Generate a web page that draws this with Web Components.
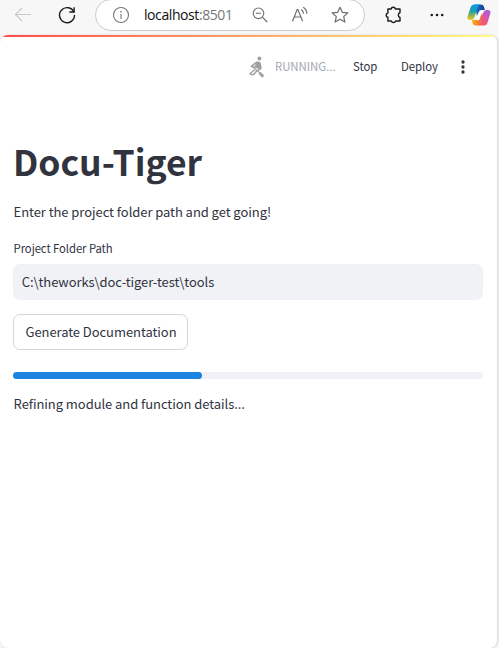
<!DOCTYPE html>
<html lang="en">
<head>
<meta charset="utf-8">
<title>Docu-Tiger</title>
<style>
html,body{margin:0;height:100%;overflow:hidden;background:#f7f7f7}
body{font-family:"Noto Sans CJK SC","Noto Sans",sans-serif;color:#31333f}
</style>
</head>
<body>
<app-window></app-window>
<script>
const define=(name,html)=>customElements.define(name,class extends HTMLElement{
  constructor(){super();this.attachShadow({mode:"open"}).innerHTML=html;}
});

define("browser-bar",`
<style>
:host{display:flex;height:35px;align-items:flex-start;background:#f7f7f7;box-sizing:border-box;padding-left:13px}
svg{display:block;flex:none;fill:none}
.back{margin:5px 24px 0 0}
.reload{margin:5px 18px 0 0}
.address{box-sizing:border-box;flex:none;width:270px;height:32px;margin-top:-1px;border:1px solid #ccc;border-radius:16px;background:#fff;display:flex;align-items:center;padding-left:15px}
.url{font:14px/20px "Open Sans","Noto Sans",sans-serif;color:#111;width:109px;margin-left:13px;white-space:nowrap;letter-spacing:-.42px}
.url span{color:#767676}
.ext{margin:5px 0 0 19px}.more{margin:5px 0 0 23px}.copilot{margin:3px 0 0 20px}
</style>
<svg class="back" width="20" height="20" stroke="#c8c8c8" stroke-width="1.2"><path d="M18 9.5H2.5M9 3L2.5 9.5 9 16"/></svg>
<svg class="reload" width="20" height="20" stroke="#1b1b1b" stroke-width="1.4"><path d="M16.9 7.2A7.5 7.5 0 1 0 17.5 10"/><path d="M17.1 2.3V7H12.3"/></svg>
<div class="address">
<svg width="20" height="20" stroke="#767676" stroke-width="1.1"><circle cx="10" cy="10" r="7.5"/><path d="M10 9v5"/><circle cx="10" cy="6.7" r=".6" fill="#767676" stroke-width=".5"/></svg>
<div class="url">localhost<span>:8501</span></div>
<svg width="18" height="18" style="margin-left:-2px" stroke="#6c6c6c" stroke-width="1.1"><circle cx="7.5" cy="7.3" r="5.3"/><path d="M5 7.3h5M11.4 11.2l4.8 4.8"/></svg>
<svg width="20" height="20" style="margin-left:22px" stroke="#6c6c6c" stroke-width="1.2"><path d="M1.5 16.2L6.2 4.5h.7l4.7 11.7M3.2 12h6.7M10.2 4.6q2 1.2 2.3 4M12.2 2.2q3.5 2 3.7 6.4"/></svg>
<svg width="20" height="20" style="margin-left:19px" stroke="#6c6c6c" stroke-width="1.2" stroke-linejoin="round"><path d="M10 2.3l2.3 5 5.5.6-4.1 3.7 1.2 5.5-4.9-2.8-4.9 2.8 1.2-5.5-4.1-3.7 5.5-.6z"/></svg>
</div>
<svg class="ext" width="20" height="20" stroke="#1b1b1b" stroke-width="1.4" stroke-linejoin="round"><path d="M4 4h3.2a2.2 2.2 0 0 1 4.3 0h4.6v3.5a2.7 2.7 0 0 0 0 5V16h-4.3a2.3 2.3 0 0 1-4.4 0H4v-3.7a2.2 2.2 0 0 1 0-4.3z" transform="translate(-.1 0)"/></svg>
<svg class="more" width="20" height="20"><g fill="#1b1b1b"><circle cx="4.8" cy="10" r="1.3"/><circle cx="10" cy="10" r="1.3"/><circle cx="15.2" cy="10" r="1.3"/></g></svg>
<svg class="copilot" width="24" height="24" viewBox="0.6 0.6 22.8 22.8">
<defs>
<linearGradient id="a" x1="0" y1="0" x2="0" y2="1"><stop offset="0" stop-color="#159ce5"/><stop offset=".4" stop-color="#169db2"/><stop offset=".7" stop-color="#8ab64b"/><stop offset="1" stop-color="#f1c71c"/></linearGradient>
<linearGradient id="b" x1=".8" y1="0" x2=".2" y2="1"><stop offset="0" stop-color="#a95ce8"/><stop offset=".5" stop-color="#e35499"/><stop offset="1" stop-color="#f85f48"/></linearGradient>
<linearGradient id="c" x1="0" y1="0" x2="1" y2="0"><stop offset="0" stop-color="#1877c9"/><stop offset="1" stop-color="#183a9c"/></linearGradient>
<linearGradient id="d" x1="0" y1="0" x2="1" y2="0"><stop offset="0" stop-color="#f9b51e"/><stop offset="1" stop-color="#f1502d"/></linearGradient>
</defs>
<path fill="url(#c)" d="M8 2h6q2 0 2.6 2l1 3.3h-3.2q-2 0-2.7 2L10 13z"/>
<path fill="url(#d)" d="M16 10l-2.8 9.2Q12.3 22 9.8 22H8.5q-2 0-2.5-2l-.8-3.2h3q2 0 2.7-2z"/>
<path fill="url(#a)" d="M7 2h6q-1.8.7-2.5 3L7.8 14q-.8 2.8-3 2.8H3.4q-3 0-2.2-3.4L4 4.6Q4.8 2 7 2z"/>
<path fill="url(#b)" d="M17 22h-6.5q2-.6 2.7-3L16 10q.8-2.7 3-2.7h1.5q3.2 0 2.2 3.4L20 19.5q-.8 2.5-3 2.5z"/>
<path fill="#fff" d="M12.6 8.3h2.6l-2.8 8.2q-.2.6-.8.6H9.2z"/>
</svg>`);

define("status-toolbar",`
<style>
:host{display:flex;height:24px;align-items:center;font-size:11.4px;line-height:24px;white-space:nowrap;padding-left:247px}
svg{flex:none;display:block}
span{margin-top:-2px}
.run{color:#a3a8b4;width:78px;margin-left:8px;letter-spacing:-.05px}
.stop{width:48px;letter-spacing:-.05px}.deploy{width:55px;letter-spacing:-.05px}
</style>
<svg width="20" height="24" fill="#a0a0a0"><circle cx="12.4" cy="3.6" r="2"/><path d="M9.2 6.6h2.6q1.8.2 2.2 2.2l.8 4.6-3.3.6-3.8-1.8z"/><path fill="none" stroke="#a0a0a0" stroke-width="1.5" stroke-linejoin="round" d="M9.5 7.4L4.3 11.4l4.3.8M14.2 13.6l-4.4 2.2-3 3.6H3.6M7.6 14.8L2.4 19.2"/><path fill="none" stroke="#a0a0a0" stroke-width="1.2" d="M5.4 11.6l9 7.6"/><path d="M13.4 17l4 3.6-2.2 2.2-3.6-3.8z"/></svg>
<span class="run">RUNNING...</span><span class="stop">Stop</span><span class="deploy">Deploy</span>
<svg width="14" height="20" fill="#31333f"><circle cx="7" cy="5" r="1.65"/><circle cx="7" cy="10" r="1.65"/><circle cx="7" cy="15" r="1.65"/></svg>`);

define("page-title",`<style>:host{display:block;font-size:35.5px;font-weight:700;line-height:48px;height:48px;white-space:nowrap;letter-spacing:-.06px}</style><slot></slot>`);
define("text-line",`<style>:host{display:block;font-size:13px;line-height:22px;height:22px;white-space:nowrap;letter-spacing:-.06px}</style><slot></slot>`);
define("path-field",`
<style>
:host{display:block;letter-spacing:-.07px}
.label{font-size:11.3px;line-height:18px;height:18px;padding-left:.6px}
.box{height:36px;margin-top:7px;border-radius:7px;background:#f0f2f6;font-size:13px;line-height:36px;padding-left:8.7px}
</style>
<div class="label">Project Folder Path</div><div class="box"><slot></slot></div>`);
define("action-button",`
<style>:host{display:flex;box-sizing:border-box;width:175px;height:36px;border:1px solid #d6d6d9;border-radius:7px;align-items:center;justify-content:center;font-size:13px;line-height:20px;white-space:nowrap;background:#fff;letter-spacing:-.065px;padding-left:1px}</style><slot></slot>`);
define("progress-bar",`
<style>:host{display:block;height:7px;border-radius:4px;background:#f0f2f6}div{width:188.5px;height:7px;border-radius:4px;background:#1c83e1}</style><div></div>`);

define("app-window",`
<style>
:host{display:flex;flex-direction:column;height:648px}
main{flex:1;width:498px;box-sizing:border-box;background:#fff;border-right:1px solid #dedede;border-radius:8px;overflow:hidden;box-shadow:0 0 2px #ccc}
.stripe{height:2px;background:linear-gradient(90deg,#ff4b4b,#fffd80)}
.content{padding:0 14px 0 13px}
status-toolbar{margin-top:18px}
page-title{margin:58px 0 0 0}
text-line{margin-left:.6px}
.intro{margin-top:16px}
path-field{margin-top:16px}
action-button{margin-top:14px}
progress-bar{margin-top:22px}
.state{margin-top:14px}
</style>
<browser-bar></browser-bar>
<main>
<div class="stripe"></div>
<status-toolbar></status-toolbar>
<div class="content">
<page-title>Docu-Tiger</page-title>
<text-line class="intro">Enter the project folder path and get going!</text-line>
<path-field>C:\\theworks\\doc-tiger-test\\tools</path-field>
<action-button>Generate Documentation</action-button>
<progress-bar></progress-bar>
<text-line class="state">Refining module and function details...</text-line>
</div>
</main>`);
</script>
</body>
</html>
